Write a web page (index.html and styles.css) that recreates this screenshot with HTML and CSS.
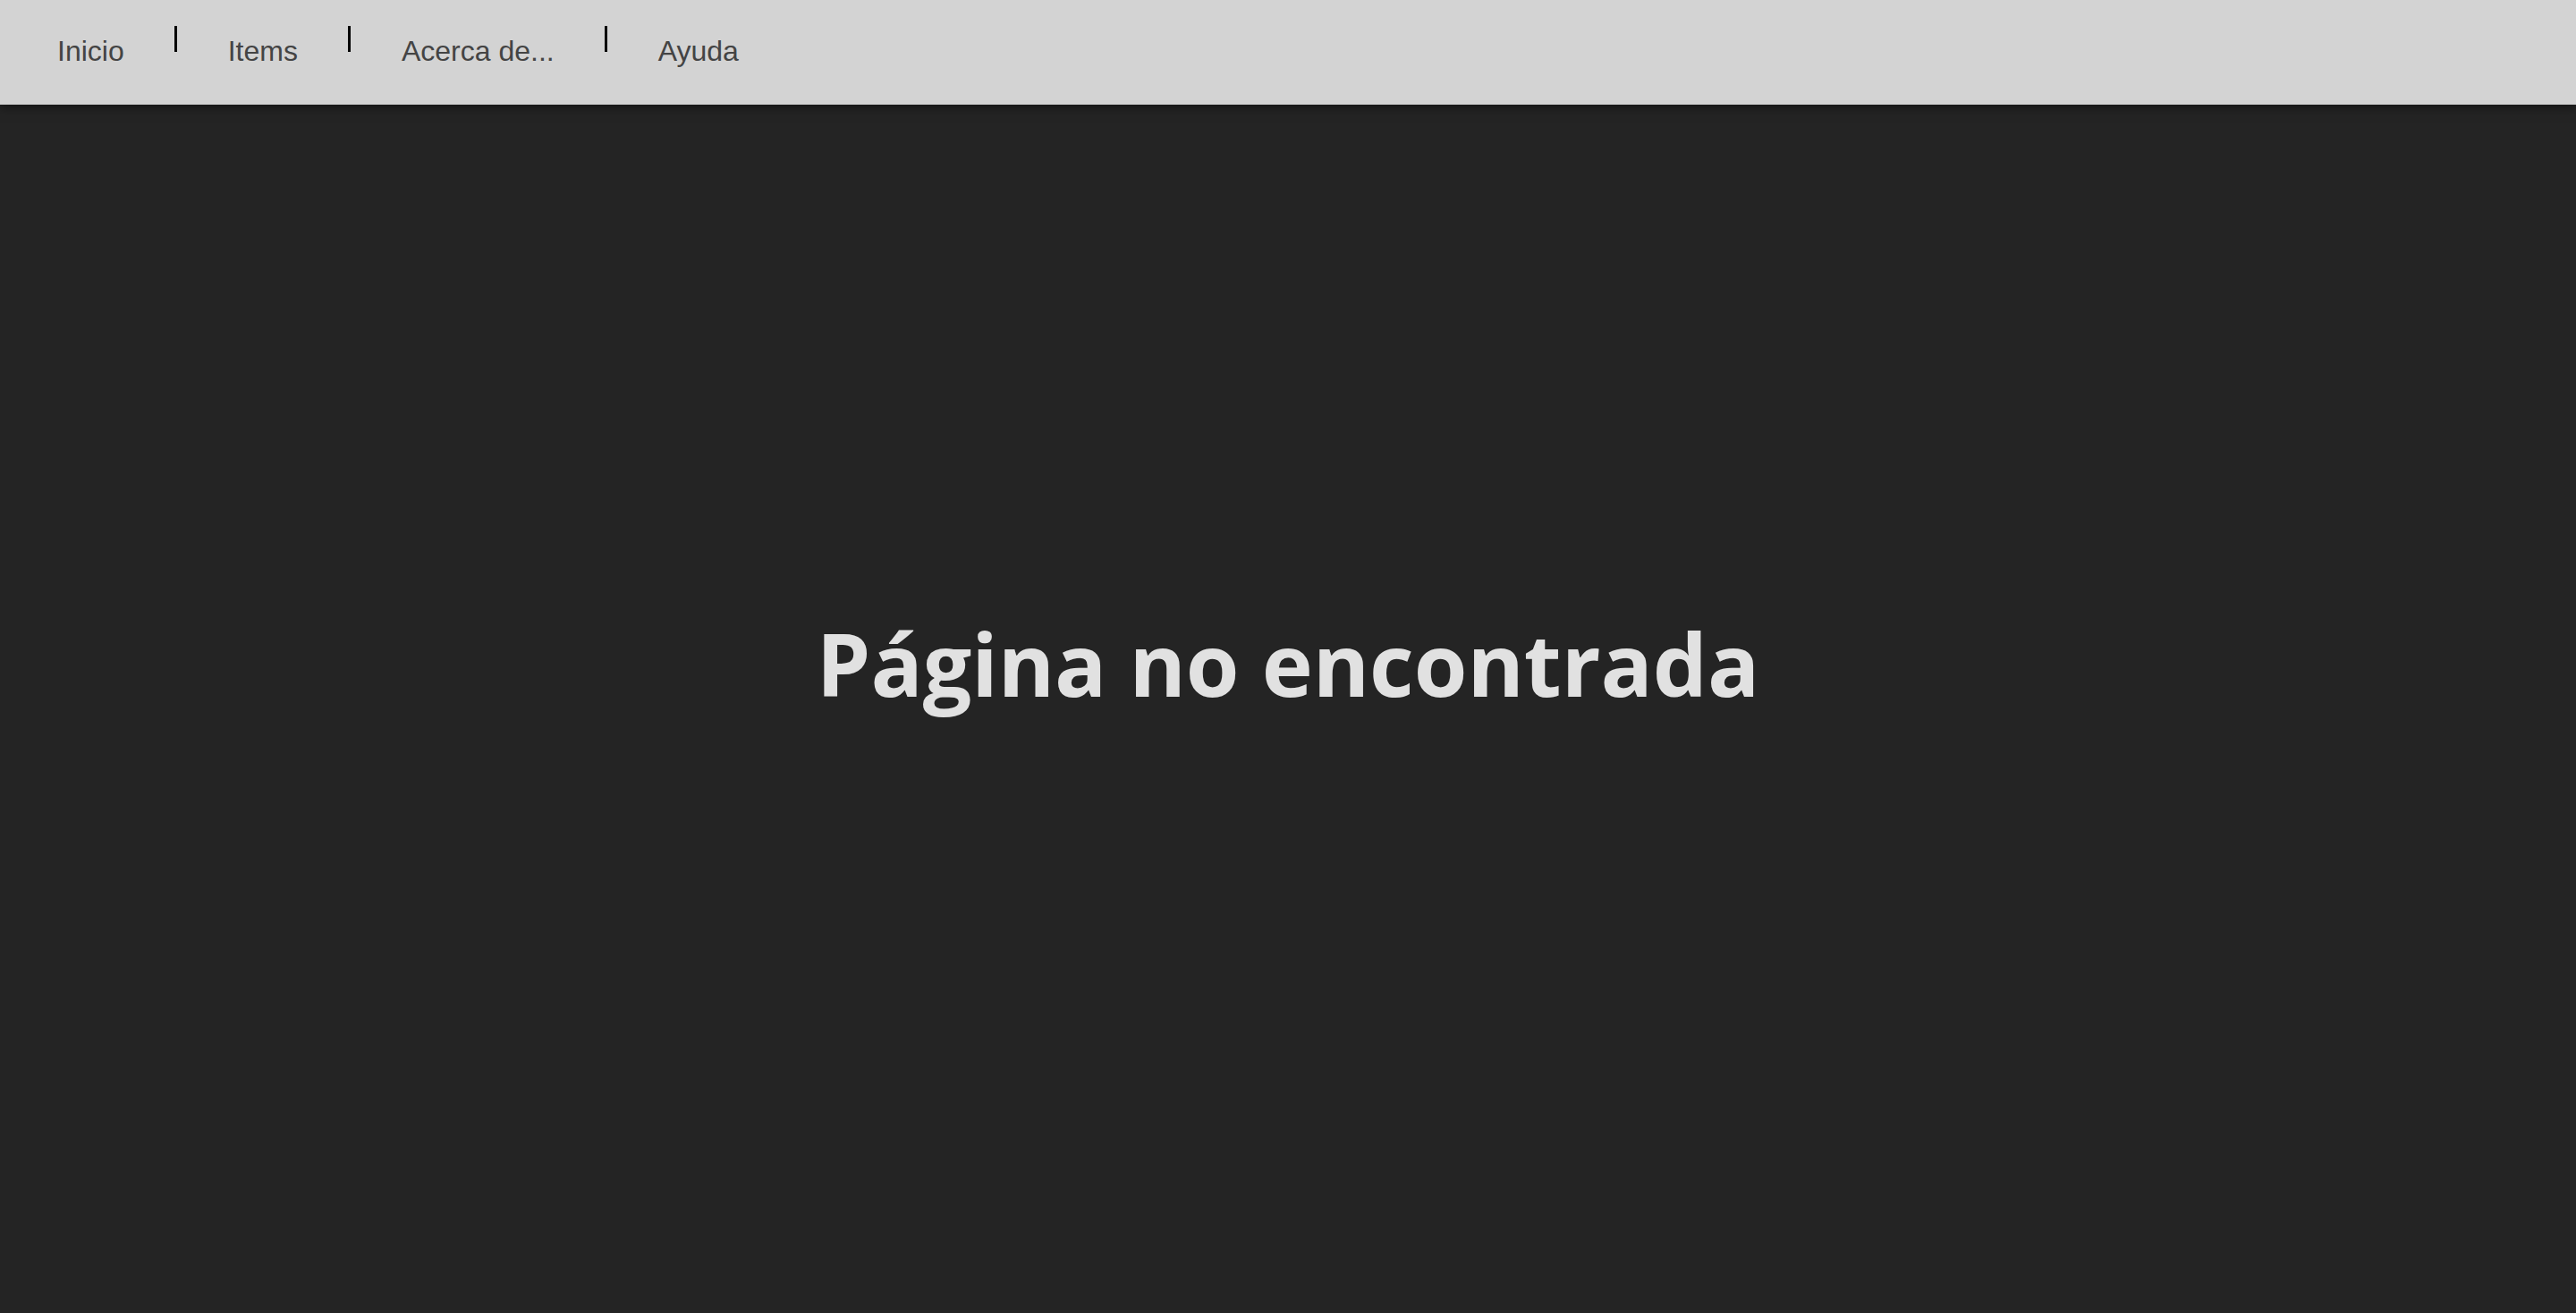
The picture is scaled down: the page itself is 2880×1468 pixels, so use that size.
FILE: index.html
```html
<!DOCTYPE html>
<html lang="es">
<head>
<meta charset="utf-8">
<title>Página no encontrada</title>
<link rel="stylesheet" href="styles.css">
</head>
<body>
<nav class="topnav">
  <a class="nav-link" href="#">Inicio</a>
  <span class="nav-sep"></span>
  <a class="nav-link" href="#">Items</a>
  <span class="nav-sep"></span>
  <a class="nav-link" href="#">Acerca de...</a>
  <span class="nav-sep"></span>
  <a class="nav-link" href="#">Ayuda</a>
</nav>
<main class="content">
  <h1 class="title">Página no encontrada</h1>
</main>
</body>
</html>
```

FILE: styles.css
```css
html, body {
  margin: 0;
  padding: 0;
  height: 100%;
}
body {
  background: #242424;
  font-family: "Liberation Sans", Arial, sans-serif;
  overflow: hidden;
}
.topnav {
  position: relative;
  z-index: 1;
  height: 117px;
  background: #d3d3d3;
  display: flex;
  align-items: center;
  gap: 56.5px;
  padding-left: 64px;
  box-sizing: border-box;
  box-shadow: 0 2px 12px rgba(0, 0, 0, 0.55);
}
.nav-link {
  color: #444444;
  font-size: 32px;
  text-decoration: none;
  margin-bottom: 3px;
}
.nav-sep {
  align-self: flex-start;
  margin-top: 29px;
  width: 3px;
  height: 29px;
  background: #000;
}
.content {
  height: calc(100vh - 117px);
  padding-bottom: 100px;
  box-sizing: border-box;
  display: flex;
  align-items: center;
  justify-content: center;
}
.title {
  margin: 0;
  color: #e1e1e1;
  font-family: "Open Sans", "Noto Sans", sans-serif;
  font-weight: 700;
  font-size: 96.5px;
  line-height: 1.33;
}
```
